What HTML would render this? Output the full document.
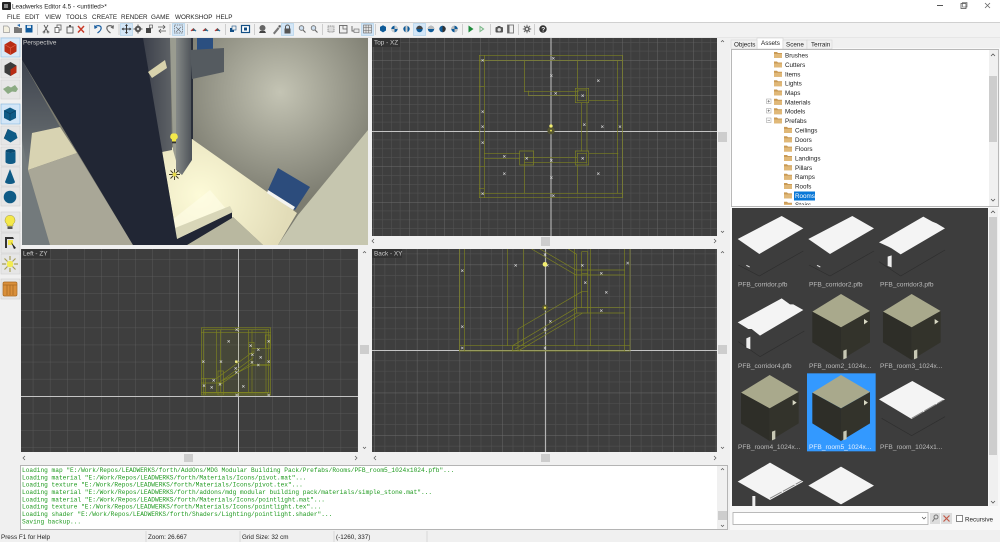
<!DOCTYPE html>
<html><head><meta charset="utf-8"><title>Leadwerks Editor 4.5</title>
<style>
html,body{margin:0;padding:0;background:#f0f0f0;width:1000px;height:542px;overflow:hidden}
svg{display:block;filter:blur(.3px)}
text{font-family:"Liberation Sans",sans-serif;font-size:6.3px;fill:#222}
.m text,text.m{font-family:"Liberation Mono",monospace;font-size:6.17px;fill:#1f9a1f}
.l{fill:#ccc;font-size:6.4px}
.t{fill:#bbb;font-size:6.6px}
.w{fill:none;stroke:#7d8220;stroke-width:2}
</style></head><body>
<svg width="1000" height="542" viewBox="0 0 1000 542" xmlns="http://www.w3.org/2000/svg">
<defs>
<radialGradient id="wall" gradientUnits="userSpaceOnUse" cx="280" cy="92" r="110"><stop offset="0" stop-color="#c4c4b4"/><stop offset="1" stop-color="#7c7c70"/></radialGradient>
<radialGradient id="floor" gradientUnits="userSpaceOnUse" cx="200" cy="195" r="90"><stop offset="0" stop-color="#fdfbd8"/><stop offset="1" stop-color="#e2dcb8"/></radialGradient>
<linearGradient id="lw" x1="0" y1="0" x2="0" y2="1"><stop offset="0" stop-color="#3f444f"/><stop offset=".5" stop-color="#5b6166"/><stop offset="1" stop-color="#80888a"/></linearGradient>
<linearGradient id="col" x1="0" y1="0" x2="1" y2="0"><stop offset="0" stop-color="#868a88"/><stop offset="1" stop-color="#4d5258"/></linearGradient>
<linearGradient id="gr2" x1="0" y1="0" x2="1" y2="0"><stop offset="0" stop-color="#3b3f4a"/><stop offset="1" stop-color="#5e6266"/></linearGradient>
<pattern id="gt" patternUnits="userSpaceOnUse" x="551" y="131" width="35.5" height="35.5"><rect width="35.5" height="35.5" fill="#3e3e3e"/><path d="M8.9 0V35.5M17.8 0V35.5M26.6 0V35.5M0 8.9H35.5M0 17.8H35.5M0 26.6H35.5" stroke="#505050" stroke-width=".6"/><path d="M0 0V35.5M0 0H35.5" stroke="#6a6a6a" stroke-width=".9"/></pattern>
<pattern id="gl" patternUnits="userSpaceOnUse" x="238" y="396" width="17.1" height="17.1"><rect width="17.1" height="17.1" fill="#3e3e3e"/><path d="M0 0V17.1M0 0H17.1" stroke="#5e5e5e" stroke-width=".8"/></pattern>
<pattern id="gb" patternUnits="userSpaceOnUse" x="545" y="350" width="42.7" height="42.7"><rect width="42.7" height="42.7" fill="#3e3e3e"/><path d="M10.7 0V42.7M21.35 0V42.7M32 0V42.7M0 10.7H42.7M0 21.35H42.7M0 32H42.7" stroke="#505050" stroke-width=".6"/><path d="M0 0V42.7M0 0H42.7" stroke="#6c6c6c" stroke-width=".9"/></pattern>
<g id="x"><path d="M-3.500 -3.500L3.500 3.500M3.500 -3.500L-3.500 3.500" stroke="#d8d8d8" stroke-width="1.800"/></g>
<g id="fold"><path d="M0 1.500h3l1 1h4v5h-8z" fill="#c99a55"/><path d="M0 3.500h8v4h-8z" fill="#e0b878"/></g>
<g id="cube">
<path d="M262 320L348 267L435 318L348 367z" fill="#a9a98c"/>
<path d="M262 320L348 367V465L262 412z" fill="#2e2e28"/>
<path d="M348 367L435 318V412L348 465z" fill="#33332b"/>
<path d="M417 342l12 8l-12 8z" fill="#d8d8c4"/>
<path d="M355 437l10 -4v26l-10 4z" fill="#c8c8b4"/>
</g>
<clipPath id="cp"><rect x="22" y="38" width="346" height="207"/></clipPath>
<clipPath id="cb"><rect x="372" y="249" width="345" height="203"/></clipPath>
<clipPath id="ca"><rect x="733" y="208" width="254" height="298"/></clipPath>
<clipPath id="ct"><rect x="732" y="50" width="256" height="155"/></clipPath>
</defs>

<!-- title bar -->
<rect width="1000" height="22" fill="#fff"/>
<rect x="0" y="22" width="1000" height="1" fill="#d0d0d0"/>
<rect x="2" y="2" width="9" height="8" rx="1" fill="#222"/><rect x="4" y="4" width="4" height="4" fill="#888"/>
<text x="12" y="8.500">Leadwerks Editor 4.5 - &lt;untitled&gt;*</text>
<path d="M937 5.500h6" stroke="#555"/><rect x="961" y="3.500" width="5" height="5" fill="none" stroke="#555" stroke-width=".8"/><rect x="962.500" y="2.500" width="4.500" height="4.500" fill="none" stroke="#555" stroke-width=".6"/>
<path d="M985 3l5 5M990 3l-5 5" stroke="#666" stroke-width=".8"/>
<!-- menu -->
<g>
<text x="7" y="19">FILE</text><text x="25" y="19">EDIT</text><text x="45" y="19">VIEW</text><text x="66" y="19">TOOLS</text><text x="92" y="19">CREATE</text><text x="121" y="19">RENDER</text><text x="151" y="19">GAME</text><text x="175" y="19">WORKSHOP</text><text x="216" y="19">HELP</text>
</g>
<!-- toolbar -->
<rect x="0" y="23" width="1000" height="14" fill="#f2f2f2"/>
<g fill="#d3e6f7" stroke="#a8cde9" stroke-width=".6">
<rect x="120.500" y="23.500" width="12" height="12"/><rect x="172.500" y="23.500" width="12" height="12"/><rect x="281.500" y="23.500" width="12" height="12"/><rect x="361.500" y="23.500" width="12" height="12"/><rect x="413.500" y="23.500" width="12" height="12"/>
</g>
<g stroke="#c4c4c4" stroke-width=".8"><path d="M37.500 24v11M89.500 24v11M119 24v11M170 24v11M187.500 24v11M225.500 24v11M254.500 24v11M322.500 24v11M375.500 24v11M462.500 24v11M490.500 24v11M518.500 24v11M534.500 24v11"/></g>
<g>
<path d="M3.500 26h4l2 2v4.500h-6z" fill="#f4f0e0" stroke="#999" stroke-width=".7"/>
<path d="M14 27h4l1 1h3v5h-8z" fill="#777"/><path d="M17 25l3 -1v3z" fill="#2a6db0"/>
<rect x="25.500" y="25" width="7" height="7.500" fill="#105a9c"/><rect x="27" y="25.500" width="4" height="2.500" fill="#dfe9f2"/>
<path d="M44 25l4 7M48 25l-4 7" stroke="#555" stroke-width=".9"/><circle cx="44" cy="32" r="1" fill="none" stroke="#555" stroke-width=".6"/><circle cx="48" cy="32" r="1" fill="none" stroke="#555" stroke-width=".6"/>
<rect x="57" y="25" width="4" height="5" fill="#fff" stroke="#555" stroke-width=".8"/><rect x="55" y="27.500" width="4" height="5" fill="#fff" stroke="#555" stroke-width=".8"/>
<rect x="67" y="27" width="6" height="6" fill="#f4f4f4" stroke="#555" stroke-width=".9"/><rect x="69" y="25" width="2" height="2" fill="#555"/>
<path d="M78 26l6 6.500M84 26l-6 6.500" stroke="#c93a28" stroke-width="1.500"/>
<path d="M95 26.500q4 -2 6 .5q1 3 -3.500 6" fill="none" stroke="#1a5ea0" stroke-width="1.200"/><path d="M94 25l.5 4l3 -1.500z" fill="#1a5ea0"/>
<path d="M113 26.500q-4 -2 -6 .5q-1 3 3.500 6" fill="none" stroke="#666" stroke-width="1.200"/><path d="M114 25l-.5 4l-3 -1.500z" fill="#666"/>
<path d="M126.500 24.500v9M122 29h9" stroke="#333" stroke-width="1"/><path d="M126.500 24l-1.500 2h3zM126.500 34l-1.500 -2h3zM121.500 29l2 -1.500v3zM131.500 29l-2 -1.500v3z" fill="#333"/>
<circle cx="138" cy="29" r="3.200" fill="#555"/><circle cx="138" cy="29" r="1.200" fill="#ddd"/><path d="M138 24.500v1.500M138 32v1.500M133.500 29h1.500M141 29h1.500" stroke="#555"/>
<rect x="146" y="28" width="5" height="5" fill="#444"/><rect x="149.500" y="25" width="3" height="3" fill="#eee" stroke="#444" stroke-width=".6"/>
<path d="M158 27h7M163 25l2 2l-2 2M166 31h-7M161 29l-2 2l2 2" fill="none" stroke="#555" stroke-width=".8"/>
<rect x="174.500" y="25" width="8" height="8" fill="none" stroke="#666" stroke-dasharray="1.500 .8" stroke-width=".7"/><path d="M176 27l5 5M181 27l-5 5" stroke="#666" stroke-width=".6"/>
<g id="r1"><path d="M190.500 31l3 -3l3 3z" fill="#555"/><path d="M191 31l2 -2" stroke="#c33"/><path d="M194 30l2 1" stroke="#27a"/></g>
<use href="#r1" x="12"/><use href="#r1" x="24"/>
<rect x="230" y="28" width="4" height="4" fill="#134f85"/><rect x="232" y="26" width="4" height="4" fill="#eee" stroke="#134f85" stroke-width=".6"/>
<rect x="241.500" y="25.500" width="8" height="7" fill="#fff" stroke="#134f85" stroke-width="1.200"/><rect x="244" y="27.500" width="3" height="3" fill="#134f85"/>
<circle cx="262.500" cy="28" r="3" fill="#666"/><path d="M259 33h7l-1 -2h-5z" fill="#444"/>
<path d="M273 33l5 -6l1.500 1.500l-5 6z" fill="#777"/><path d="M278 26l2 -1l1 1l-1 2z" fill="#555"/>
<rect x="284.500" y="28.500" width="6" height="5" fill="#555"/><path d="M285.500 28.500v-1.500a2 2 0 0 1 4 0v1.500" fill="none" stroke="#555"/>
<circle cx="301.500" cy="28" r="2.300" fill="#cfe0f0" stroke="#666" stroke-width=".8"/><path d="M303 30l2.500 2.500" stroke="#666" stroke-width="1.100"/>
<circle cx="313.500" cy="28" r="2.300" fill="#cfe0f0" stroke="#666" stroke-width=".8"/><path d="M315 30l2.500 2.500" stroke="#666" stroke-width="1.100"/>
<rect x="328" y="26" width="6" height="6" fill="#ddd" stroke="#777" stroke-width=".7" stroke-dasharray="1.200 .6"/>
<rect x="339.500" y="25.500" width="7.500" height="7.500" fill="#eee" stroke="#666" stroke-width=".9"/><path d="M343 25.500v3.500h4" fill="none" stroke="#666" stroke-width=".8"/>
<path d="M352 26v5h7" fill="none" stroke="#666" stroke-width=".9"/><rect x="354" y="29" width="5" height="3.500" fill="#e6e6e6" stroke="#666" stroke-width=".6"/>
<rect x="363.500" y="25" width="8" height="8" fill="#e0e0e0" stroke="#666" stroke-width=".6"/><path d="M366 25v8M368.700 25v8M363.500 27.700h8M363.500 30.300h8" stroke="#666" stroke-width=".5"/>
<g id="s0"><path d="M383 25.200l3 1.700v3.600l-3 1.900l-3 -1.900v-3.600z" fill="#0f5b98"/></g>
<g><circle cx="394.500" cy="29" r="3.200" fill="#0f5b98"/><path d="M394.500 25.800a3.200 3.200 0 0 1 3.200 3.200h-3.200z" fill="#ccc"/><path d="M394.500 29h-3.200a3.200 3.200 0 0 0 3.200 3.200z" fill="#ccc"/></g>
<g><circle cx="406.500" cy="29" r="3.200" fill="#0f5b98"/><rect x="405.500" y="25.800" width="2" height="6.400" fill="#ccc"/></g>
<g><circle cx="419.500" cy="29" r="3.200" fill="#0f5b98"/><path d="M416.300 29a3.200 3.200 0 0 1 6.400 0z" fill="#444"/></g>
<g><circle cx="431" cy="29" r="3.200" fill="#0f5b98"/><path d="M427.800 29a3.200 3.200 0 0 1 6.400 0z" fill="#bbb"/></g>
<g><circle cx="442.500" cy="29" r="3.200" fill="#0f5b98"/><path d="M442.500 25.800a3.200 3.200 0 0 1 0 6.400z" fill="#333"/></g>
<g><circle cx="454.500" cy="29" r="3.200" fill="#0f5b98"/><path d="M454.500 29h3.200a3.200 3.200 0 0 1 -3.200 3.200z" fill="#bbb"/><path d="M454.500 29v-3.200a3.200 3.200 0 0 0 -3.200 3.200z" fill="#bbb"/></g>
<path d="M468.500 25.500l5 3.500l-5 3.500z" fill="#1c8a3a"/>
<path d="M479.500 25.500l5 3.500l-5 3.500z" fill="#7cb98a"/><path d="M480.500 27.500l2 1.500l-2 1.500z" fill="#f0f0f0"/>
<rect x="495.500" y="27" width="7.500" height="5.500" rx="1" fill="#555"/><circle cx="499.200" cy="29.700" r="1.700" fill="#ddd"/><rect x="497.500" y="26" width="3" height="1.500" fill="#555"/>
<rect x="507.500" y="25" width="6" height="8" fill="#eee" stroke="#777" stroke-width=".9"/><rect x="507.500" y="25" width="2" height="8" fill="#666"/>
<circle cx="527" cy="29" r="2.800" fill="#666"/><circle cx="527" cy="29" r="1.100" fill="#eee"/><path d="M527 24.800v1.500M527 31.700v1.500M522.800 29h1.500M529.700 29h1.500M524 26l1 1M529 31l1 1M530 26l-1 1M525 31l-1 1" stroke="#666" stroke-width=".9"/>
<circle cx="543" cy="29" r="3.700" fill="#333"/><text x="541.300" y="31.500" style="fill:#fff;font-weight:bold;font-size:6.500px">?</text>
</g>
<rect x="0" y="37" width="1000" height="1" fill="#e6e6e6"/>

<!-- left toolbar -->
<g fill="#e6e6e6" stroke="#d0d0d0" stroke-width=".6">
<rect x="1" y="38" width="19" height="19" fill="#d8e9f8" stroke="#8fc0e6"/>
<rect x="1" y="59" width="19" height="19"/>
<rect x="1" y="80" width="19" height="19"/>
<rect x="1" y="104" width="19" height="20" fill="#d3e6f7" stroke="#7fb5de"/>
<rect x="1" y="126" width="19" height="19"/>
<rect x="1" y="147" width="19" height="19"/>
<rect x="1" y="167" width="19" height="19"/>
<rect x="1" y="187" width="19" height="19"/>
<rect x="1" y="212" width="19" height="20"/>
<rect x="1" y="233" width="19" height="20"/>
<rect x="1" y="254" width="19" height="20"/>
<rect x="1" y="279" width="19" height="20"/>
</g>
<path d="M10.500 41l6 3.500v7l-6 3.500l-6 -3.500v-7z" fill="#b92c14"/><path d="M4.500 44.500l6 3.500l6 -3.500M10.500 48v7" fill="none" stroke="#e0644c" stroke-width=".6"/>
<path d="M10.500 62l6 3.500v7l-6 3.500l-6 -3.500v-7z" fill="#3c3c3c"/><path d="M10.500 69.500l6 -4v7l-6 3.500z" fill="#b92c14"/>
<path d="M3 89l5 -3l3 1.500l4 -2.500l3 4l-2 3l-4 -.5l-4 2.500l-3 -3z" fill="#8cab84"/>
<path d="M10 107.500l6 3v7.500l-6 3l-6 -3v-7.500z" fill="#0f5b86"/><path d="M4 110.500l6 3.300l6 -3.300M10 113.800v7" fill="none" stroke="#0a3c5c" stroke-width=".6"/>
<path d="M8 129l8 4l1.500 5l-7 4.500l-6.500 -4z" fill="#0f5b86"/><path d="M8 129l-4 9.500" stroke="#0a3c5c" stroke-width=".5"/>
<ellipse cx="10.500" cy="151" rx="5" ry="2" fill="#0a4a70"/><path d="M5.500 151v11a5 2 0 0 0 10 0v-11a5 2 0 0 1 -10 0z" fill="#0f5b86"/>
<path d="M10 169l5 13a5 2 0 0 1 -10 0z" fill="#0f5b86"/>
<circle cx="10" cy="197" r="6.300" fill="#0f5b86"/>
<path d="M10 215.500a4.700 4.700 0 0 1 3 8.500v2h-6v-2a4.700 4.700 0 0 1 3 -8.500z" fill="#f4e84a" stroke="#9c9230" stroke-width=".5"/><rect x="7.500" y="226.500" width="5" height="2.500" fill="#555"/>
<path d="M5 237h8l1 2h-7v9h-2z" fill="#333"/><rect x="8" y="240" width="5" height="5" fill="#f4e84a"/><path d="M11 242l5 6l-2 1z" fill="#222"/>
<circle cx="10" cy="264" r="3.300" fill="#f3ec50"/><path d="M10 256v4M10 268v4M2 264h4M14 264h4M4.500 258.500l3 3M12.500 266.500l3 3M15.500 258.500l-3 3M7.500 266.500l-3 3" stroke="#a89f58" stroke-width="1.200"/>
<rect x="3" y="282" width="14" height="14" rx="1.500" fill="#d98f3a" stroke="#a96a22" stroke-width=".7"/><path d="M3 285h14M7 285v10M10 285v10M13 285v10" stroke="#a96a22" stroke-width=".8"/>

<!-- perspective -->
<g clip-path="url(#cp)">
<rect x="22" y="38" width="346" height="207" fill="url(#wall)"/>
<path d="M22 60L60 127L32 133L28 170L22 190z" fill="url(#lw)"/>
<path d="M22 140L28 170L50 245H22z" fill="#737a7c"/>
<path d="M32 133L60 127L77 153L28 170z" fill="#d8d3b2"/>
<path d="M28 170L77 153L133 245H50z" fill="#a9a797"/>
<path d="M162 152L192 139L297 213L278 245H263L233 217L177 238z" fill="url(#floor)"/>
<path d="M172 220L177 238L233 217L210 190z" fill="#fffde8" opacity=".6"/>
<path d="M278 245L298 215L368 130V245z" fill="#c6c6af"/>
<path d="M187 245L233 217L263 245z" fill="#b9b8a0"/>
<path d="M177 239L232 212L232 218L187 245H177z" fill="#212634"/>
<path d="M175 228L230 206L233 212L177 239z" fill="#d8d6b8"/>
<path d="M278 168L310 187L295 210L268 190z" fill="#2c4c7c"/>
<path d="M268 190L295 207L293 210L267 193z" fill="#f4f4f0"/>
<path d="M142 38H170L172 150L162 152z" fill="url(#gr2)"/>
<path d="M170 38H176L180 175L173 150z" fill="#9a9c90"/>
<path d="M176 38H192V160L182 175L176 170z" fill="url(#col)"/>
<path d="M191 38H193V139H191z" fill="#2a2f3a"/>
<path d="M197 38H213V49L197 50z" fill="#2b4f80"/>
<path d="M190 50L224 48V72L192 79z" fill="#555b60"/>
<path d="M22 38V60L133 245H178L143 38z" fill="#212634"/>
<path d="M148 72L165 60L167 68L152 78z" fill="#d8d2ac"/>
<path d="M174 133.500a3.200 3.200 0 0 1 2 6v2h-4v-2a3.200 3.200 0 0 1 2 -6z" fill="#f4e84a"/><rect x="172" y="141.500" width="4" height="1.800" fill="#333"/>
<path d="M174.500 169v11M169 174.500h11M170.500 170.500l8 8M178.500 170.500l-8 8" stroke="#3e3a20" stroke-width=".9"/><circle cx="174.500" cy="174.500" r="2" fill="#e8dc4a"/>
</g>
<text class="l" x="23" y="44.500">Perspective</text>

<!-- Top -->
<rect x="372" y="38" width="345" height="198" fill="url(#gt)"/>
<path d="M372 131.500H717M551 38V236" stroke="#c4c4c4" stroke-width="1"/>
<rect x="372" y="38" width="28" height="9" fill="#333"/><text class="l" x="374" y="44.500">Top - XZ</text>
<g transform="translate(440 40) scale(.3333)">
<path class="w" d="M118 46H548V473H118zM133 46V473M118 62H548M118 460H548M533 62V460M118 140H133M118 380H133M118 445H133"/>
<path class="w" d="M253 62V155H416M265 152V166H416M413 62V145M406 145H446V188H406zM412 150H440V182H412zM446 182H535"/>
<path class="w" d="M425 188V333M441 188V333M406 333H446V375H406zM412 340H440V368H412zM446 340H535"/>
<path class="w" d="M133 340H240M133 355H240M239 333H281V375H239zM253 340V460M253 352H413M253 368H413M413 375V460"/>
<use href="#x" x="128" y="61"/><use href="#x" x="340" y="55"/><use href="#x" x="334" y="107"/><use href="#x" x="475" y="122"/><use href="#x" x="347" y="160"/><use href="#x" x="428" y="167"/><use href="#x" x="128" y="215"/><use href="#x" x="128" y="260"/><use href="#x" x="128" y="308"/><use href="#x" x="433" y="254"/><use href="#x" x="487" y="260"/><use href="#x" x="540" y="260"/><use href="#x" x="193" y="349"/><use href="#x" x="260" y="355"/><use href="#x" x="334" y="361"/><use href="#x" x="428" y="355"/><use href="#x" x="193" y="401"/><use href="#x" x="334" y="413"/><use href="#x" x="475" y="401"/><use href="#x" x="128" y="461"/><use href="#x" x="340" y="467"/>
<circle cx="333" cy="272" r="11" fill="#555530"/><circle cx="333" cy="258" r="5" fill="#f2ee70"/><circle cx="333" cy="272" r="3" fill="#e0d850"/>
</g>

<!-- Left -->
<rect x="21" y="249" width="337" height="203" fill="url(#gl)"/>
<path d="M21 396.500H358M238.500 249V452" stroke="#c4c4c4" stroke-width="1"/>
<rect x="22" y="249" width="28" height="9" fill="#333"/><text class="l" x="23" y="255.500">Left - ZY</text>
<g transform="translate(190 315) scale(.3333)">
<path d="M34 38H242V240H34z" fill="#7a7f1e" opacity=".14"/>
<path class="w" d="M34 38H242V240H34zM40 44H236V234H40zM34 52H242M34 190H80M34 204H100M34 232H242M80 44V234M92 44V234M176 44V234M186 44V234M228 44V234M236 44V234"/>
<path class="w" d="M80 190L190 110M86 204L190 128M92 208L190 140M100 196L186 150M176 82H192V115H176zM186 100H240M186 148H240M186 152H240M226 60H240V100H226zM40 190V240M46 190V240M84 168H100V240H84z"/>
<use href="#x" x="140" y="44"/><use href="#x" x="116" y="79"/><use href="#x" x="236" y="79"/><use href="#x" x="182" y="92"/><use href="#x" x="205" y="104"/><use href="#x" x="187" y="119"/><use href="#x" x="212" y="127"/><use href="#x" x="40" y="140"/><use href="#x" x="93" y="140"/><use href="#x" x="139" y="140"/><use href="#x" x="186" y="142"/><use href="#x" x="236" y="140"/><use href="#x" x="205" y="150"/><use href="#x" x="137" y="160"/><use href="#x" x="139" y="172"/><use href="#x" x="71" y="196"/><use href="#x" x="90" y="208"/><use href="#x" x="42" y="212"/><use href="#x" x="65" y="217"/><use href="#x" x="160" y="214"/><use href="#x" x="140" y="240"/><use href="#x" x="236" y="240"/>
<circle cx="139" cy="140" r="4" fill="#efe97a"/>
</g>

<!-- Back -->
<rect x="372" y="249" width="345" height="203" fill="url(#gb)"/>
<path d="M372 350.500H717" stroke="#c4c4c4" stroke-width="1"/><path d="M545.500 249V452" stroke="#b4b4b4" stroke-width="1.200"/>
<rect x="372" y="249" width="30" height="9" fill="#333"/><text class="l" x="374" y="255.500">Back - XY</text>
<g clip-path="url(#cb)"><g transform="translate(440 245) scale(.3333)">
<path class="w" d="M58 12V318H570V12M74 12V318M554 12V318M58 188H74M58 302H570M218 318V302M203 12V302M250 12V302M403 12V302M451 12V302M58 317H218M234 317H555"/>
<path class="w" d="M275 12L408 90H555M300 12L408 75H555M385 12L410 28V204M425 20H443V204M425 20V188M425 85H443M425 140H443M410 188H555M410 204H555"/>
<path class="w" d="M234 252L425 140M234 252V316M218 302L410 188M225 312L410 204M236 317L428 204M218 302V318M234 317L218 316"/>
<use href="#x" x="67" y="77"/><use href="#x" x="227" y="61"/><use href="#x" x="322" y="61"/><use href="#x" x="427" y="61"/><use href="#x" x="563" y="54"/><use href="#x" x="484" y="85"/><use href="#x" x="436" y="113"/><use href="#x" x="499" y="142"/><use href="#x" x="484" y="197"/><use href="#x" x="331" y="229"/><use href="#x" x="67" y="245"/><use href="#x" x="315" y="254"/><use href="#x" x="315" y="29"/><use href="#x" x="67" y="309"/><use href="#x" x="315" y="309"/>
<circle cx="315" cy="58" r="7" fill="#f2ee70"/><circle cx="315" cy="188" r="9" fill="#55552e"/><circle cx="315" cy="188" r="3.500" fill="#ece24e"/>
</g></g>

<!-- view scrollbars -->
<g fill="#cdcdcd">
<rect x="718" y="132" width="9" height="10"/><rect x="541" y="237" width="9" height="9"/>
<rect x="360" y="345" width="9" height="9"/><rect x="718" y="345" width="9" height="9"/>
<rect x="184" y="454" width="9" height="8"/><rect x="541" y="454" width="9" height="8"/>
</g>
<g fill="none" stroke="#555" stroke-width=".7">
<path d="M374 243l-2 -2l2 -2M714 243l2 -2l-2 -2M721 42l1.500 -1.500l1.500 1.500M721 231l1.500 1.500l1.500 -1.500"/>
<path d="M25 460l-2 -2l2 -2M355 460l2 -2l-2 -2M376 460l-2 -2l2 -2M714 460l2 -2l-2 -2"/>
<path d="M363 253l1.500 -1.500l1.500 1.500M363 447l1.500 1.500l1.500 -1.500M721 253l1.500 -1.500l1.500 1.500M721 447l1.500 1.500l1.500 -1.500"/>
</g>

<!-- console -->
<rect x="20.500" y="465.500" width="707" height="64" fill="#fff" stroke="#b4b4b4"/>
<rect x="717" y="466" width="10" height="63" fill="#f0f0f0"/>
<rect x="718" y="511" width="9" height="9" fill="#cdcdcd"/>
<path d="M721 470l1.500 -1.500l1.500 1.500M721 525l1.500 1.500l1.500 -1.500" fill="none" stroke="#555" stroke-width=".7"/>
<g class="m">
<text x="22" y="472">Loading map "E:/Work/Repos/LEADWERKS/forth/AddOns/MDG Modular Building Pack/Prefabs/Rooms/PFB_room5_1024x1024.pfb"...</text>
<text x="22" y="479.300">Loading material "E:/Work/Repos/LEADWERKS/forth/Materials/Icons/pivot.mat"...</text>
<text x="22" y="486.700">Loading texture "E:/Work/Repos/LEADWERKS/forth/Materials/Icons/pivot.tex"...</text>
<text x="22" y="494">Loading material "E:/Work/Repos/LEADWERKS/forth/addons/mdg modular building pack/materials/simple_stone.mat"...</text>
<text x="22" y="501.400">Loading material "E:/Work/Repos/LEADWERKS/forth/Materials/Icons/pointlight.mat"...</text>
<text x="22" y="508.700">Loading texture "E:/Work/Repos/LEADWERKS/forth/Materials/Icons/pointlight.tex"...</text>
<text x="22" y="516.100">Loading shader "E:/Work/Repos/LEADWERKS/forth/Shaders/Lighting/pointlight.shader"...</text>
<text x="22" y="523.400">Saving backup...</text>
</g>

<!-- status -->
<path d="M146 531v11M240 531v11M334 531v11M427 531v11" stroke="#d8d8d8"/>
<text x="1" y="539">Press F1 for Help</text>
<text x="148" y="539">Zoom: 26.667</text>
<text x="242" y="539">Grid Size: 32 cm</text>
<text x="336" y="539">(-1260, 337)</text>

<!-- right panel -->
<rect x="730" y="48" width="270" height="482" fill="#f8f8f8"/>
<rect x="757" y="38" width="26" height="11" fill="#fff" stroke="#d0d0d0" stroke-width=".6"/>
<rect x="731" y="40" width="26" height="9" fill="#f0f0f0" stroke="#d4d4d4" stroke-width=".6"/>
<rect x="783" y="40" width="24" height="9" fill="#f0f0f0" stroke="#d4d4d4" stroke-width=".6"/>
<rect x="807" y="40" width="25" height="9" fill="#f0f0f0" stroke="#d4d4d4" stroke-width=".6"/>
<text x="734" y="46.500">Objects</text><text x="761" y="45">Assets</text><text x="786" y="46.500">Scene</text><text x="811" y="46.500">Terrain</text>
<rect x="731.500" y="49.500" width="267" height="157" fill="#fff" stroke="#a8a8a8" stroke-width=".8"/>
<rect x="989" y="50" width="9" height="156" fill="#f0f0f0"/><rect x="989" y="76" width="8" height="66" fill="#cdcdcd"/>
<path d="M991 56l2 -2l2 2M991 199l2 2l2 -2" fill="none" stroke="#555" stroke-width=".8"/>
<g clip-path="url(#ct)">
<use href="#fold" x="774" y="50.500"/><text x="785" y="57.500">Brushes</text>
<use href="#fold" x="774" y="60"/><text x="785" y="67">Cutters</text>
<use href="#fold" x="774" y="69.300"/><text x="785" y="76.300">Items</text>
<use href="#fold" x="774" y="78.700"/><text x="785" y="85.700">Lights</text>
<use href="#fold" x="774" y="88"/><text x="785" y="95">Maps</text>
<use href="#fold" x="774" y="97.300"/><text x="785" y="104.300">Materials</text>
<use href="#fold" x="774" y="106.700"/><text x="785" y="113.700">Models</text>
<use href="#fold" x="774" y="116"/><text x="785" y="123">Prefabs</text>
<use href="#fold" x="784" y="125.400"/><text x="795" y="132.400">Ceilings</text>
<use href="#fold" x="784" y="134.800"/><text x="795" y="141.800">Doors</text>
<use href="#fold" x="784" y="144.100"/><text x="795" y="151.100">Floors</text>
<use href="#fold" x="784" y="153.500"/><text x="795" y="160.500">Landings</text>
<use href="#fold" x="784" y="162.800"/><text x="795" y="169.800">Pillars</text>
<use href="#fold" x="784" y="172.200"/><text x="795" y="179.200">Ramps</text>
<use href="#fold" x="784" y="181.500"/><text x="795" y="188.500">Roofs</text>
<use href="#fold" x="784" y="190.900"/><rect x="794" y="191.500" width="21" height="9" fill="#0a78d7"/><text x="795" y="198" style="fill:#fff">Rooms</text>
<use href="#fold" x="784" y="200.200"/><text x="795" y="207.200">Stairs</text>
</g>
<g fill="#fff" stroke="#999" stroke-width=".5"><rect x="766.500" y="99" width="4.500" height="4.500"/><rect x="766.500" y="108.500" width="4.500" height="4.500"/><rect x="766.500" y="118" width="4.500" height="4.500"/></g>
<path d="M767.500 101.200h2.500M768.700 100v2.500M767.500 110.700h2.500M768.700 109.500v2.500M767.500 120.200h2.500" stroke="#555" stroke-width=".5"/>

<!-- asset view -->
<rect x="732" y="208" width="256" height="298" fill="#3d3d3d"/>
<rect x="989" y="208" width="9" height="298" fill="#f0f0f0"/><rect x="989" y="217" width="8" height="238" fill="#cdcdcd"/>
<path d="M991 213l2 -2l2 2M991 501l2 2l2 -2" fill="none" stroke="#555" stroke-width=".8"/>
<g clip-path="url(#ca)">
<g transform="translate(725 205) scale(.3333)">
<g id="c1"><path d="M38 102L170 33L235 70L103 147z" fill="#f4f4f4"/><path d="M40 180L103 213L235 138" fill="none" stroke="#2e2e2e" stroke-width="2"/><path d="M64 181l10 5" stroke="#ddd" stroke-width="3"/></g>
<use href="#c1" x="212"/>
<path d="M462 112L595 35L622 50L635 55L660 70L527 148L500 130L490 125z" fill="#f4f4f4"/><path d="M462 170L527 213L660 135" fill="none" stroke="#2e2e2e" stroke-width="2"/><path d="M488 155l12 -4v36l-12 -4z" fill="#eee"/>
<path d="M38 352L170 280L195 298L205 298L235 315L105 392L80 372L70 372z" fill="#f4f4f4"/><path d="M40 410L105 455L238 378" fill="none" stroke="#2e2e2e" stroke-width="2"/><path d="M64 400l12 -5v38l-12 -5z" fill="#eee"/>
<use href="#cube"/>
<use href="#cube" x="212"/>
</g>
<g transform="translate(725 370) scale(.3333)">
<rect x="246" y="10" width="206" height="234" fill="#3399ff"/>
<use href="#cube" transform="translate(-214 -252)"/>
<use href="#cube" transform="translate(0 -252)"/>
<path d="M462 88L562 33L660 88L560 147z" fill="#f4f4f4"/><path d="M560 145l95 -55" stroke="#888" stroke-width="3" stroke-dasharray="40 4"/><path d="M470 145L560 197L660 140" fill="none" stroke="#2e2e2e" stroke-width="2"/>
<path d="M38 335L135 278L235 335L135 390z" fill="#f4f4f4"/><path d="M135 385l95 -52" stroke="#888" stroke-width="3" stroke-dasharray="40 4"/><path d="M82 378h9v30h-9z" fill="#eee"/><path d="M250 347L348 290L447 347L348 403z" fill="#f4f4f4"/>
</g>
<text class="t" x="738" y="286.500">PFB_corridor.pfb</text>
<text class="t" x="809" y="286.500">PFB_corridor2.pfb</text>
<text class="t" x="880" y="286.500">PFB_corridor3.pfb</text>
<text class="t" x="738" y="368">PFB_corridor4.pfb</text>
<text class="t" x="809" y="368">PFB_room2_1024x...</text>
<text class="t" x="880" y="368">PFB_room3_1024x...</text>
<text class="t" x="738" y="449">PFB_room4_1024x...</text>
<text class="t" x="809" y="449" style="fill:#e4f0ff">PFB_room5_1024x...</text>
<text class="t" x="880" y="449">PFB_room_1024x1...</text>
</g>

<!-- search -->
<rect x="733" y="512.500" width="195" height="12" fill="#fff" stroke="#aaa" stroke-width=".8"/>
<path d="M922 517l2 2l2 -2" fill="none" stroke="#555" stroke-width=".7"/>
<rect x="930" y="513" width="10" height="11" fill="#ddd"/><circle cx="936" cy="517" r="2" fill="none" stroke="#777"/><path d="M934.500 518.500l-2 3" stroke="#777"/>
<rect x="941" y="513" width="11" height="11" fill="#ddd"/><path d="M943.500 515.500l6 6M949.500 515.500l-6 6" stroke="#c25a48" stroke-width="1.200"/>
<rect x="956.500" y="515.500" width="6" height="6" fill="#fff" stroke="#555" stroke-width=".7"/>
<text x="965" y="521.500">Recursive</text>
</svg>
</body></html>
